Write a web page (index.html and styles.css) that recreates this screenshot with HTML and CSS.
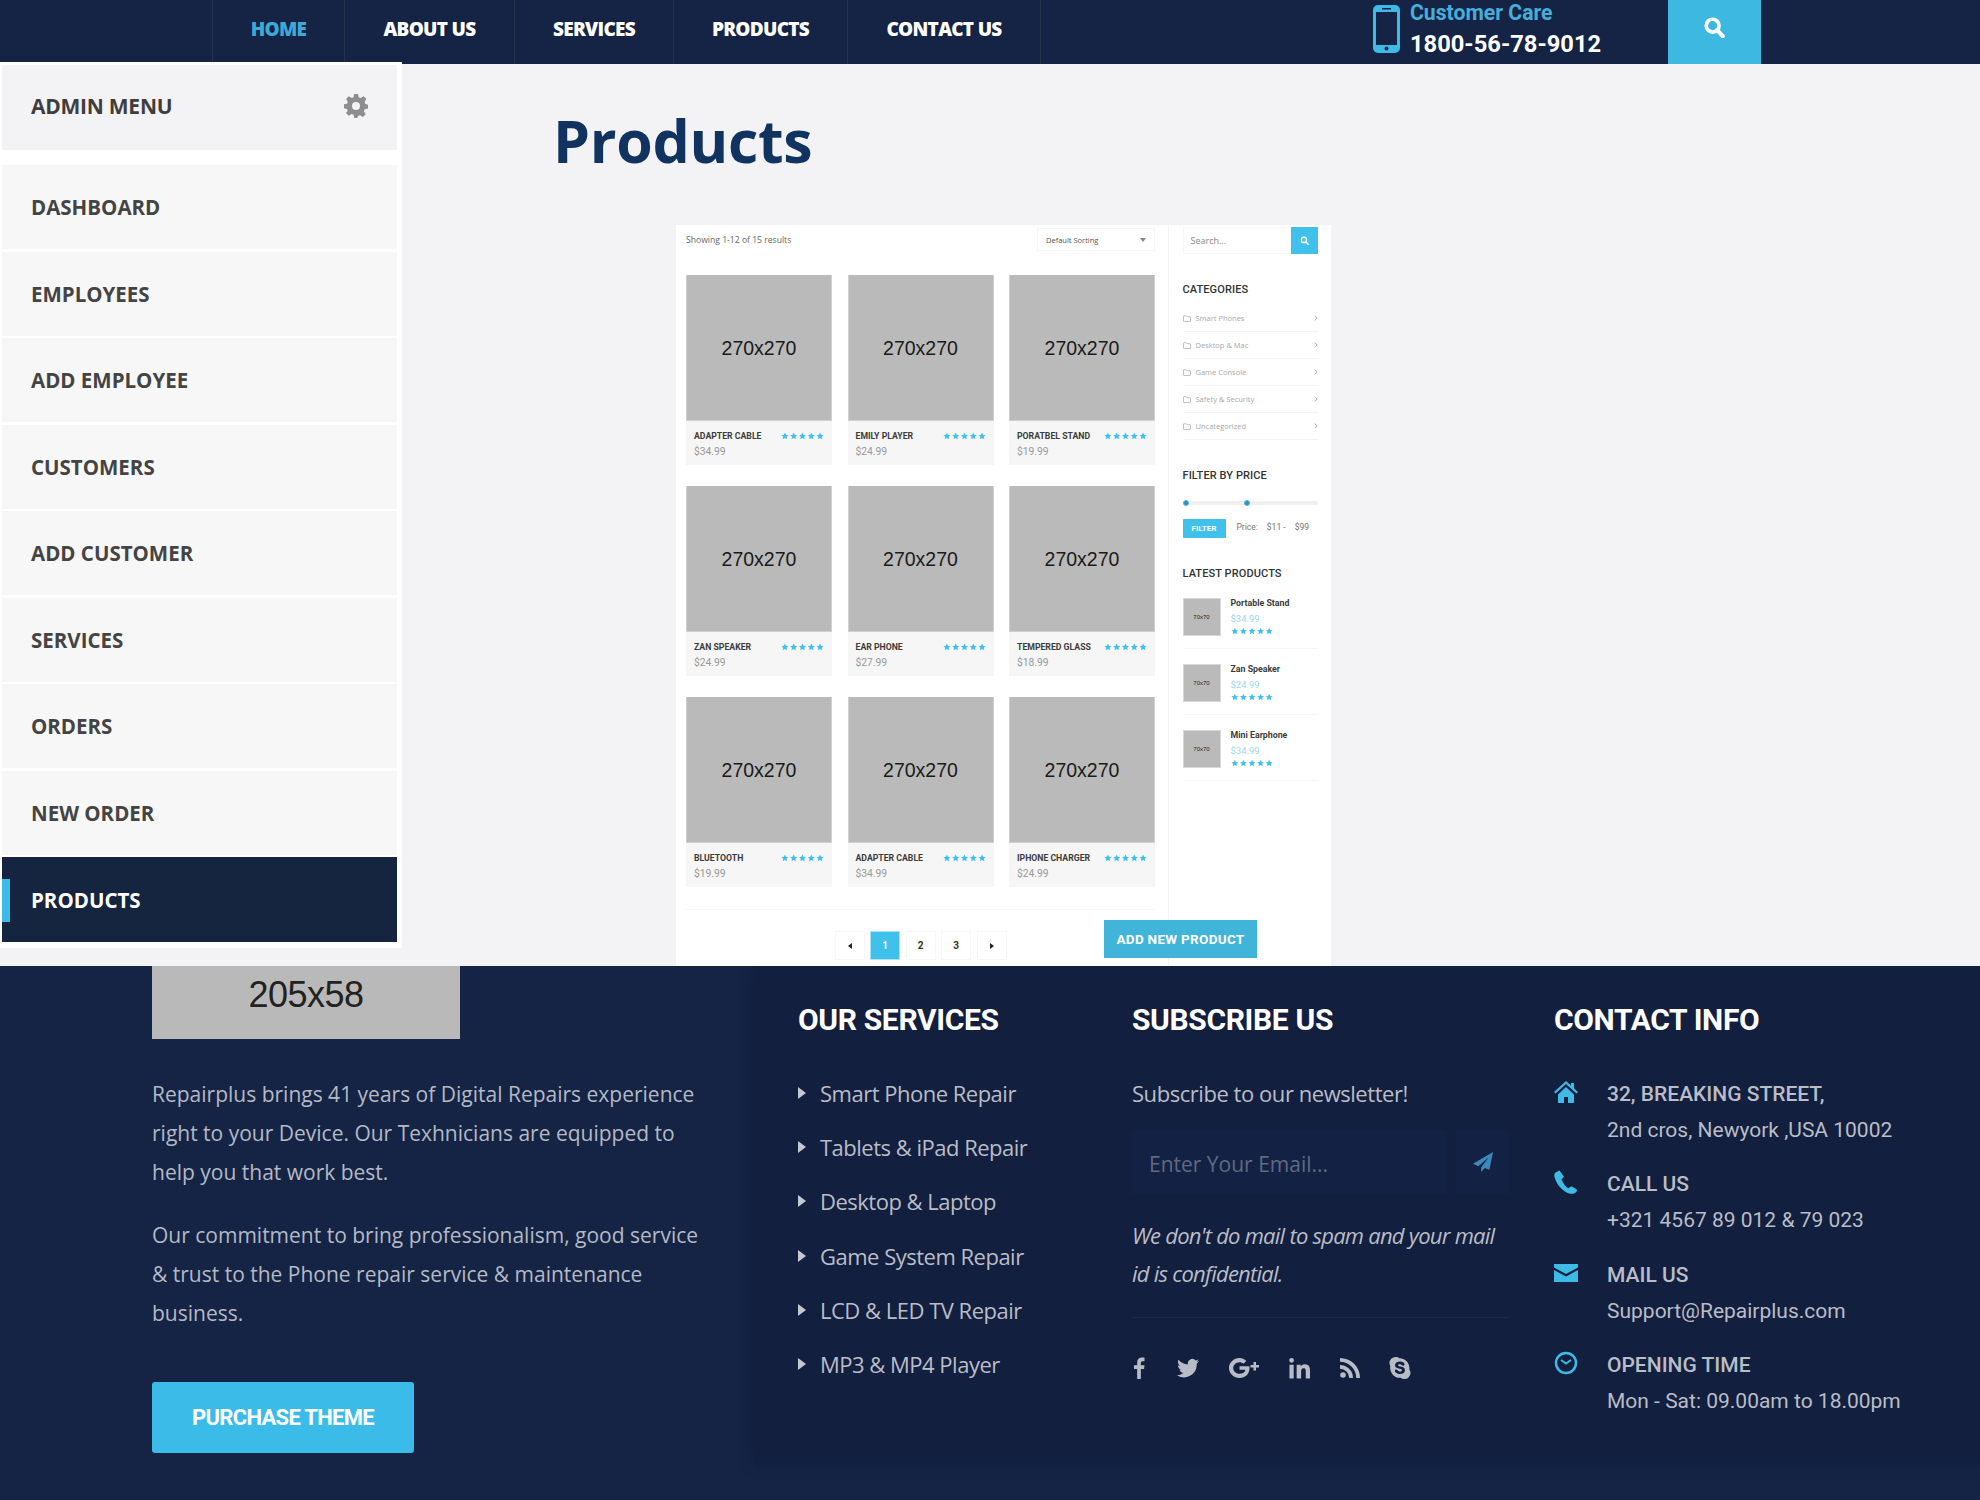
FILE: index.html
```html
<!DOCTYPE html>
<html lang="en">
<head>
<meta charset="utf-8">
<title>Products</title>
<link rel="stylesheet" href="styles.css">
</head>
<body>
<svg class="defs" width="0" height="0" aria-hidden="true">
  <symbol id="star" viewBox="0 0 24 24"><path d="M12 1.5l3.2 7 7.6.9-5.6 5.2 1.5 7.5L12 18.3l-6.7 3.8 1.5-7.5L1.2 9.400l7.600-.9z"/></symbol>
  <symbol id="stars" viewBox="0 0 44 8"><use href="#star" x="0" width="8" height="8"/><use href="#star" x="9" width="8" height="8"/><use href="#star" x="18" width="8" height="8"/><use href="#star" x="27" width="8" height="8"/><use href="#star" x="36" width="8" height="8"/></symbol>
  <symbol id="search" viewBox="0 0 24 24"><circle cx="10.500" cy="10.500" r="7" fill="none" stroke="currentColor" stroke-width="4"/><path d="M15.500 15.500l6 6.500" fill="none" stroke="currentColor" stroke-width="4.500" stroke-linecap="round"/></symbol>
  <symbol id="folder" viewBox="0 0 16 14"><path d="M1 2.500V12a1 1 0 0 0 1 1h12a1 1 0 0 0 1-1V4.500a1 1 0 0 0-1-1H8L6.500 1.500H2A1 1 0 0 0 1 2.500z" fill="none" stroke="currentColor" stroke-width="1.200"/></symbol>
  <symbol id="chev" viewBox="0 0 6 10"><path d="M1 1l4 4-4 4" fill="none" stroke="currentColor" stroke-width="1.200"/></symbol>
</svg>

<header class="topbar">
  <nav class="nav">
    <a class="nav-link is-active">HOME</a>
    <a class="nav-link">ABOUT US</a>
    <a class="nav-link">SERVICES</a>
    <a class="nav-link">PRODUCTS</a>
    <a class="nav-link">CONTACT US</a>
  </nav>
  <div class="care">
    <svg class="care-icon" viewBox="0 0 27 48"><path fill-rule="evenodd" d="M5 0h17a5 5 0 0 1 5 5v38a5 5 0 0 1-5 5H5a5 5 0 0 1-5-5V5a5 5 0 0 1 5-5zM3 7v33h21V7zM9 3v1.500h9V3zM13.500 41.500a2 2 0 1 0 0 4 2 2 0 0 0 0-4z"/></svg>
    <div class="care-text">
      <div class="care-label">Customer Care</div>
      <div class="care-number">1800-56-78-9012</div>
    </div>
  </div>
  <div class="top-search"><svg class="top-search-icon"><use href="#search"/></svg></div>
</header>

<main class="main">
  <aside class="sidebar">
    <div class="side-head">
      <span>ADMIN MENU</span>
      <svg class="gear" viewBox="0 0 24 24"><path fill-rule="evenodd" d="M10 0h4l.7 3.300 2 .8L19.600 2.300l2.800 2.800-1.800 2.900.8 2L24 10.700v3.900l-3.300.7-.8 2 1.800 2.900-2.800 2.800-2.900-1.800-2 .8L13.300 24h-3l-.7-3.300-2-.8-2.900 1.800-2.800-2.800L3.700 16.900l-.8-2L0 14.300v-4l3-.6.800-2L2.100 5 4.900 2.200 7.700 4l2-.8zM12 8a4 4 0 1 0 0 8 4 4 0 0 0 0-8z"/></svg>
    </div>
    <ul class="side-menu">
      <li class="side-item">DASHBOARD</li>
      <li class="side-item">EMPLOYEES</li>
      <li class="side-item">ADD EMPLOYEE</li>
      <li class="side-item">CUSTOMERS</li>
      <li class="side-item">ADD CUSTOMER</li>
      <li class="side-item">SERVICES</li>
      <li class="side-item">ORDERS</li>
      <li class="side-item">NEW ORDER</li>
      <li class="side-item is-current">PRODUCTS</li>
    </ul>
  </aside>

  <section class="content">
    <h1 class="page-title">Products</h1>
    <div class="shop">
      <div class="shop-main">
        <div class="shop-bar">
          <span class="showing">Showing 1-12 of 15 results</span>
          <div class="sort"><span>Default Sorting</span><i class="sort-caret"></i></div>
        </div>
        <div class="grid">
          <article class="card"><div class="ph">270x270</div><div class="cap"><div class="cap-top"><b>ADAPTER CABLE</b><svg class="stars"><use href="#stars"/></svg></div><div class="price">$34.99</div></div></article>
          <article class="card"><div class="ph">270x270</div><div class="cap"><div class="cap-top"><b>EMILY PLAYER</b><svg class="stars"><use href="#stars"/></svg></div><div class="price">$24.99</div></div></article>
          <article class="card"><div class="ph">270x270</div><div class="cap"><div class="cap-top"><b>PORATBEL STAND</b><svg class="stars"><use href="#stars"/></svg></div><div class="price">$19.99</div></div></article>
          <article class="card"><div class="ph">270x270</div><div class="cap"><div class="cap-top"><b>ZAN SPEAKER</b><svg class="stars"><use href="#stars"/></svg></div><div class="price">$24.99</div></div></article>
          <article class="card"><div class="ph">270x270</div><div class="cap"><div class="cap-top"><b>EAR PHONE</b><svg class="stars"><use href="#stars"/></svg></div><div class="price">$27.99</div></div></article>
          <article class="card"><div class="ph">270x270</div><div class="cap"><div class="cap-top"><b>TEMPERED GLASS</b><svg class="stars"><use href="#stars"/></svg></div><div class="price">$18.99</div></div></article>
          <article class="card"><div class="ph">270x270</div><div class="cap"><div class="cap-top"><b>BLUETOOTH</b><svg class="stars"><use href="#stars"/></svg></div><div class="price">$19.99</div></div></article>
          <article class="card"><div class="ph">270x270</div><div class="cap"><div class="cap-top"><b>ADAPTER CABLE</b><svg class="stars"><use href="#stars"/></svg></div><div class="price">$34.99</div></div></article>
          <article class="card"><div class="ph">270x270</div><div class="cap"><div class="cap-top"><b>IPHONE CHARGER</b><svg class="stars"><use href="#stars"/></svg></div><div class="price">$24.99</div></div></article>
        </div>
        <div class="pager">
          <span class="page"><i class="tri tri-l"></i></span>
          <span class="page is-on">1</span>
          <span class="page">2</span>
          <span class="page">3</span>
          <span class="page"><i class="tri tri-r"></i></span>
        </div>
      </div>
      <div class="shop-side">
        <div class="side-search"><span class="side-search-box">Search...</span><span class="side-search-btn"><svg class="mini-search"><use href="#search"/></svg></span></div>
        <h4 class="w-title w-cat">CATEGORIES</h4>
        <ul class="cats">
          <li class="cat"><svg class="folder"><use href="#folder"/></svg><span>Smart Phones</span><svg class="chev"><use href="#chev"/></svg></li>
          <li class="cat"><svg class="folder"><use href="#folder"/></svg><span>Desktop &amp; Mac</span><svg class="chev"><use href="#chev"/></svg></li>
          <li class="cat"><svg class="folder"><use href="#folder"/></svg><span>Game Console</span><svg class="chev"><use href="#chev"/></svg></li>
          <li class="cat"><svg class="folder"><use href="#folder"/></svg><span>Safety &amp; Security</span><svg class="chev"><use href="#chev"/></svg></li>
          <li class="cat"><svg class="folder"><use href="#folder"/></svg><span>Uncategorized</span><svg class="chev"><use href="#chev"/></svg></li>
        </ul>
        <h4 class="w-title w-filter">FILTER BY PRICE</h4>
        <div class="slider"><i class="knob"></i><i class="knob"></i></div>
        <div class="filter-row"><span class="filter-btn">FILTER</span><span class="filter-price"><span>Price:</span><span>$11 -</span><span>$99</span></span></div>
        <h4 class="w-title w-latest">LATEST PRODUCTS</h4>
        <div class="latest"><div class="thumb">70x70</div><div class="latest-info"><b>Portable Stand</b><span>$34.99</span><svg class="stars-sm"><use href="#stars"/></svg></div></div>
        <div class="latest"><div class="thumb">70x70</div><div class="latest-info"><b>Zan Speaker</b><span>$24.99</span><svg class="stars-sm"><use href="#stars"/></svg></div></div>
        <div class="latest"><div class="thumb">70x70</div><div class="latest-info"><b>Mini Earphone</b><span>$34.99</span><svg class="stars-sm"><use href="#stars"/></svg></div></div>
      </div>
      <a class="add-btn">ADD NEW PRODUCT</a>
    </div>
  </section>
</main>

<footer class="footer">
  <div class="foot-about">
    <div class="foot-logo">205x58</div>
    <p class="foot-p">Repairplus brings 41 years of Digital Repairs experience right to your Device. Our Texhnicians are equipped to help you that work best.</p>
    <p class="foot-p">Our commitment to bring professionalism, good service &amp; trust to the Phone repair service &amp; maintenance business.</p>
    <a class="buy-btn">PURCHASE THEME</a>
  </div>
  <div class="foot-right">
    <div class="foot-services">
      <h3 class="foot-h">OUR SERVICES</h3>
      <ul class="svc-list">
        <li class="svc">Smart Phone Repair</li>
        <li class="svc">Tablets &amp; iPad Repair</li>
        <li class="svc">Desktop &amp; Laptop</li>
        <li class="svc">Game System Repair</li>
        <li class="svc">LCD &amp; LED TV Repair</li>
        <li class="svc">MP3 &amp; MP4 Player</li>
      </ul>
    </div>
    <div class="foot-sub">
      <h3 class="foot-h">SUBSCRIBE US</h3>
      <p class="sub-line">Subscribe to our newsletter!</p>
      <div class="sub-form">
        <span class="sub-input">Enter Your Email...</span>
        <span class="sub-send"><svg class="send" viewBox="0 0 24 24"><path d="M23 1L1 14l6 2.500L18 7l-8 11v5l4-4.500 5 2z"/></svg></span>
      </div>
      <p class="sub-note">We don't do mail to spam and your mail id is confidential.</p>
      <div class="social">
        <svg class="soc soc-f" viewBox="0 0 12 24"><path d="M8 24V13h3.500l.5-4H8V6.500C8 5.300 8.400 4.500 10 4.500h2V.7C11.600.600 10.500.500 9.200.500 6.300.500 4 2.300 4 5.800V9H.5v4H4v11z"/></svg>
        <svg class="soc soc-t" viewBox="0 0 24 20"><path d="M24 2.400c-.9.400-1.800.7-2.800.8 1-.6 1.800-1.600 2.200-2.700-1 .6-2 1-3.100 1.200A4.900 4.900 0 0 0 11.900 6.100C7.800 5.900 4.200 3.900 1.700.9.300 3.200 1 6.100 3.200 7.500c-.8 0-1.600-.2-2.200-.6 0 2.400 1.600 4.400 3.900 4.900-.7.200-1.500.2-2.200.1.600 2 2.400 3.400 4.600 3.400A9.900 9.900 0 0 1 0 17.800 13.900 13.900 0 0 0 21.500 5.400c1-.7 1.800-1.600 2.500-3z"/></svg>
        <svg class="soc soc-g" viewBox="0 0 32 22"><path d="M10.500 9.200v3.600h5.900c-.5 2.500-2.600 4-5.900 4-3.500 0-6.300-2.800-6.300-5.800s2.800-5.800 6.300-5.800c1.500 0 2.900.5 4 1.500l2.800-2.800C15.400 2 13.100 1 10.500 1 4.700 1 0 5.500 0 11s4.700 10 10.500 10c6 0 10-4.100 10-9.900 0-.7-.1-1.300-.2-1.900zM27 8V5h-2.500v3h-3v2.500h3v3H27v-3h3V8z"/></svg>
        <svg class="soc soc-in" viewBox="0 0 22 22"><path d="M.5 7.500h4.400V22H.5zM2.700.500a2.500 2.500 0 1 1 0 5 2.500 2.500 0 0 1 0-5zM8 7.500h4.200v2c.6-1.200 2.100-2.400 4.300-2.400 4.600 0 5.500 3 5.500 7V22h-4.400v-7c0-1.700 0-3.800-2.300-3.800s-2.600 1.800-2.600 3.700V22H8z"/></svg>
        <svg class="soc soc-r" viewBox="0 0 20 20"><circle cx="3" cy="17" r="2.800"/><path d="M0 7v3.800A9.200 9.200 0 0 1 9.200 20H13A13 13 0 0 0 0 7zM0 0v3.800A16.200 16.200 0 0 1 16.200 20H20A20 20 0 0 0 0 0z"/></svg>
        <svg class="soc soc-s" viewBox="0 0 22 24"><path fill-rule="evenodd" d="M7 1c1.300 0 2.400.500 3.300 1.200C14 1.700 21 5 20.500 13.800c.7 1 1 2.100 1 3.200A6 6 0 0 1 15 23c-1.300 0-2.400-.400-3.300-1.200C6 22.500.5 17.500 1.200 10 .7 9 .5 8 .5 7A6 6 0 0 1 7 1zM11 5.500c-3 0-5 1.500-5 3.600 0 4.500 7 3 7 5.200 0 .8-.9 1.300-2 1.300-2.300 0-2.300-2-3.800-2-.8 0-1.300.5-1.300 1.200 0 1.700 2.500 3.200 5.100 3.200 3 0 5-1.500 5-3.800 0-4.600-7-3.200-7-5 0-.7.700-1 1.800-1 1.900 0 2 1.500 3.400 1.500.8 0 1.400-.5 1.400-1.200 0-1.700-2.400-3-4.600-3z"/></svg>
      </div>
    </div>
    <div class="foot-contact">
      <h3 class="foot-h">CONTACT INFO</h3>
      <div class="info">
        <svg class="info-icon" viewBox="0 0 24 22"><path d="M12 0L0 11l1.500 1.500L12 3l10.500 9.500L24 11l-4-3.700V2h-3v2.600zM4 13.500V22h6v-6h4v6h6v-8.500L12 6z"/></svg>
        <div class="info-text"><strong>32, BREAKING STREET,</strong><span>2nd cros, Newyork ,USA 10002</span></div>
      </div>
      <div class="info">
        <svg class="info-icon" viewBox="0 0 24 24"><path d="M5.500.500L1.500 2.500C.500 3.500 0 5 .5 7c1.500 5.500 5 11 10.500 14.500 2.500 1.800 5.500 2.500 8 2.200 1.500-.2 3-1.200 4-3l-.5-1.500-5-3-3 2c-2.500-1-5.500-5-7-9l2.500-2.500z"/></svg>
        <div class="info-text"><strong>CALL US</strong><span>+321 4567 89 012 &amp; 79 023</span></div>
      </div>
      <div class="info">
        <svg class="info-icon" viewBox="0 0 24 18"><path d="M0 0h24v3.500L12 10 0 3.500zM0 6l12 6.500L24 6v12H0z"/></svg>
        <div class="info-text"><strong>MAIL US</strong><span>Support@Repairplus.com</span></div>
      </div>
      <div class="info">
        <svg class="info-icon" viewBox="0 0 24 24"><circle cx="12" cy="12" r="10" fill="none" stroke="currentColor" stroke-width="2.500"/><path d="M7 9l5 3.500L17 9" fill="none" stroke="currentColor" stroke-width="2"/></svg>
        <div class="info-text"><strong>OPENING TIME</strong><span>Mon - Sat: 09.00am to 18.00pm</span></div>
      </div>
    </div>
  </div>
</footer>
</body>
</html>
```
FILE: styles.css
```css
* { box-sizing: border-box; }
html, body { margin: 0; padding: 0; }
body { width: 1980px; height: 1500px; overflow: hidden; background: #f3f3f5; font-family: "Open Sans", sans-serif; color: #333; }
ul { margin: 0; padding: 0; list-style: none; }
.defs { display: block; height: 0; }

/* top bar */
.topbar { height: 64px; background: #152444; display: flex; padding-left: 212px; color: #fff; }
.nav { display: flex; width: 829px; border-left: 1px solid #24324c; }
.nav-link { display: flex; align-items: center; justify-content: center; height: 58px; font-size: 19px; font-weight: 800; letter-spacing: -0.7px; color: #fff; border-right: 1px solid #24324c; box-sizing: content-box; padding-bottom: 6px; }
.nav-link:nth-child(1) { width: 131px; }
.nav-link:nth-child(2) { width: 169px; }
.nav-link:nth-child(3) { width: 158px; }
.nav-link:nth-child(4) { width: 173px; }
.nav-link:nth-child(5) { width: 192px; }
.nav-link.is-active { color: #3fa9d6; }
.care { display: flex; margin-left: 332px; width: 295px; }
.care-icon { width: 27px; height: 48px; margin-top: 5px; fill: #3dbbe6; }
.care-text { margin-left: 10px; font-family: "Roboto", sans-serif; font-weight: 700; }
.care-label { font-size: 21.200px; line-height: 26px; color: #46aedb; }
.care-number { font-size: 23.700px; line-height: 34px; margin-top: 1px; color: #fff; }
.top-search { width: 93px; height: 64px; background: #3db8e0; display: flex; justify-content: center; padding-top: 16px; }
.top-search-icon { width: 22px; height: 22px; color: #fff; margin-left: -2px; }

/* main */
.main { height: 902px; display: flex; align-items: flex-start; }
.sidebar { width: 402px; height: 886px; margin-top: -2px; background: #fff; padding: 3px 5px 0 2px; position: relative; }
.side-head { height: 85px; background: #f3f3f5; display: flex; align-items: center; justify-content: space-between; padding: 0 29px 4px; font-size: 21px; font-weight: 700; letter-spacing: -0.25px; color: #3e3e3e; margin-bottom: 15px; }
.gear { width: 24px; height: 24px; fill: #8d8d8d; margin-right: 0; }
.side-menu { display: flex; flex-direction: column; gap: 2.500px; }
.side-item { height: 84px; background: #f7f7f7; display: flex; align-items: center; padding-left: 29px; font-size: 20.500px; font-weight: 700; color: #444; }
.side-item.is-current { height: 85px; background: #15243f; color: #fff; position: relative; }
.side-item.is-current::before { content: ""; position: absolute; left: 0; top: 22px; width: 8px; height: 43px; background: #3dbbe6; }

.content { flex: 1; display: flex; flex-direction: column; height: 902px; }
.page-title { margin: 36px 0 0 151px; font-size: 59px; line-height: 80px; font-weight: 700; letter-spacing: -0.3px; color: #10335f; }
.shop { margin: 45px 0 0 274px; width: 655px; height: 741px; background: #fff; display: flex; position: relative; }
.shop-main { width: 493px; border-right: 1px solid #f3f3f5; padding: 0 13px 0 10px; }
.shop-bar { height: 50px; display: flex; justify-content: space-between; align-items: flex-start; }
.showing { font-size: 8.600px; line-height: 30px; color: #666; }
.sort { width: 118px; height: 23px; margin-top: 3px; border: 1px solid #f6f6f6; display: flex; justify-content: space-between; align-items: center; padding: 0 8px; font-size: 7.500px; color: #555; }
.sort-caret { width: 0; height: 0; border: 3.500px solid transparent; border-top: 4px solid #888; border-bottom: 0; }
.grid { display: grid; grid-template-columns: repeat(3, 146px); grid-auto-rows: 190px; column-gap: 15.500px; row-gap: 21px; height: 635px; border-bottom: 1px solid #f7f7f7; }
.card { display: flex; flex-direction: column; }
.ph { height: 146px; padding-top: 2px; background: #bababa; border: 1px solid #d0d0d0; border-top-width: 0; display: flex; align-items: center; justify-content: center; font-family: "Liberation Sans", sans-serif; font-size: 19.500px; color: #1a1a1a; }
.cap { height: 44px; background: #f6f6f6; padding: 8px 8px 0; font-family: "Roboto", sans-serif; }
.cap-top { display: flex; justify-content: space-between; align-items: center; height: 14px; }
.cap-top b { font-size: 8.700px; font-weight: 700; color: #3c3c3c; }
.stars { width: 43px; height: 8px; fill: #3fc1ec; }
.price { margin-top: 2px; font-size: 10.300px; line-height: 14px; color: #999; }
.pager { display: flex; justify-content: center; gap: 5.500px; margin-top: 21px; }
.page { width: 30px; height: 29px; border: 1px solid #f7f7f7; display: flex; align-items: center; justify-content: center; font-family: "Roboto", sans-serif; font-size: 10px; font-weight: 700; color: #333; }
.page.is-on { background: #3fc1ec; color: #fff; border-color: #a8e3f6; }
.tri { width: 0; height: 0; border: 3px solid transparent; }
.tri-l { border-right: 4px solid #222; border-left: 0; }
.tri-r { border-left: 4px solid #222; border-right: 0; }

.shop-side { flex: 1; padding: 2px 13px 0 13.500px; font-family: "Roboto", sans-serif; }
.side-search { display: flex; height: 27px; }
.side-search-box { flex: 1; border: 1px solid #f6f6f6; font-family: "Open Sans", sans-serif; font-size: 9px; line-height: 25px; padding-left: 7px; color: #888; }
.side-search-btn { width: 27px; background: #3fc1ec; display: flex; align-items: center; justify-content: center; }
.mini-search { width: 9px; height: 9px; color: #fff; }
.w-title { margin: 0; font-size: 11px; line-height: 14px; font-weight: 500; letter-spacing: .1px; color: #333; }
.w-cat { margin-top: 29px; }
.cats { margin-top: 8px; }
.cat { height: 27px; border-bottom: 1px solid #f5f5f5; display: flex; align-items: center; font-size: 7.500px; color: #a8a8a8; font-family: "Open Sans", sans-serif; }
.cat span { flex: 1; }
.folder { width: 8px; height: 7px; margin-right: 5px; color: #999; }
.chev { width: 4px; height: 6px; color: #888; }
.w-filter { margin-top: 29px; }
.slider { margin-top: 18px; height: 4px; background: #f0f0f0; border-radius: 2px; display: flex; align-items: center; gap: 55px; }
.knob { width: 6px; height: 6px; border-radius: 50%; background: #2f8fbf; border: 1px solid #57b6de; flex: none; }
.filter-row { display: flex; align-items: center; margin-top: 14px; }
.filter-btn { width: 43px; height: 19px; background: #3fc1ec; border-radius: 1px; color: #fff; font-size: 8px; font-weight: 700; text-align: center; line-height: 19px; }
.filter-price { display: flex; gap: 9px; margin-left: 11px; margin-top: -3px; font-size: 8.500px; color: #777; }
.w-latest { margin-top: 29px; margin-bottom: 17px; }
.latest { height: 51px; margin-bottom: 15px; display: flex; border-bottom: 1px solid #f7f7f7; }
.thumb { width: 38px; height: 38px; background: #bababa; border: 1px solid #d8d8d8; display: flex; align-items: center; justify-content: center; font-family: "Liberation Sans", sans-serif; font-size: 6px; color: #222; }
.latest-info { margin-left: 10px; display: flex; flex-direction: column; margin-top: -1px; }
.latest-info b { font-size: 8.800px; line-height: 12px; font-weight: 700; color: #3c3c3c; }
.latest-info span { font-size: 9.500px; line-height: 14px; margin-top: 3px; color: #9ad9f0; }
.stars-sm { width: 42px; height: 8px; fill: #3fc1ec; margin-top: 1px; }
.add-btn { position: absolute; left: 428px; top: 695px; width: 153px; height: 38px; background: #41b5d9; color: #fff; font-family: "Roboto", sans-serif; font-weight: 700; font-size: 13.500px; display: flex; align-items: center; justify-content: center; letter-spacing: .3px; }

/* footer */
.footer { height: 534px; background: #152445; display: flex; overflow: hidden; }
.foot-about { width: 755px; padding-left: 152px; }
.foot-logo { width: 308px; height: 73px; background: #b9b9b9; display: flex; align-items: center; justify-content: center; padding-bottom: 15px; font-family: "Liberation Sans", sans-serif; font-size: 36px; letter-spacing: -0.5px; color: #222; }
.foot-p { width: 560px; margin: 36px 0 0; font-size: 21px; line-height: 39px; color: #b4b9c4; }
.foot-p + .foot-p { margin-top: 23.500px; }
.buy-btn { display: flex; align-items: center; justify-content: center; width: 262px; height: 71px; margin-top: 49.500px; background: #3bbce8; border-radius: 3px; color: #fff; font-family: "Roboto", sans-serif; font-weight: 700; font-size: 22px; letter-spacing: -0.7px; }
.foot-right { width: 1225px; height: 498px; background: #131f3e; box-shadow: 0 0 14px rgba(10, 15, 40, .35); display: flex; padding-left: 43px; font-family: "Roboto", sans-serif; }
.foot-h { margin: 39px 0 0; font-size: 30px; line-height: 30px; font-weight: 700; color: #fff; letter-spacing: -0.35px; }
.foot-services { width: 334px; }
.svc-list { margin-top: 38px; display: flex; flex-direction: column; gap: 14.200px; }
.svc { position: relative; padding-left: 22px; font-size: 22px; line-height: 40px; letter-spacing: -0.5px; color: #b9bdc7; font-family: "Open Sans", sans-serif; }
.svc::before { content: ""; position: absolute; left: 0; top: 14px; border: 6px solid transparent; border-left: 8px solid #c4c8d0; border-right: 0; }
.foot-sub { width: 377px; }
.sub-line { margin: 38px 0 0; font-size: 22px; line-height: 40px; letter-spacing: -0.45px; color: #b9bdc7; font-family: "Open Sans", sans-serif; }
.sub-form { display: flex; justify-content: space-between; margin-top: 17px; }
.sub-input { width: 315px; height: 64px; background: #132244; padding-left: 17px; font-family: "Open Sans", sans-serif; font-size: 21px; line-height: 68px; color: #5e6a80; }
.sub-send { width: 53px; height: 64px; background: #132244; display: flex; align-items: center; justify-content: center; }
.send { width: 22px; height: 22px; fill: #3d87bd; }
.sub-note { margin: 22px 0 0; padding-bottom: 25px; border-bottom: 1px solid #1c2a48; font-size: 22px; line-height: 38px; font-style: italic; color: #b9bdc7; font-family: "Open Sans", sans-serif; letter-spacing: -0.75px; }
.social { display: flex; align-items: center; margin-top: 38px; height: 24px; }
.soc { fill: #b8bcc6; height: 22px; flex: none; }
.soc-f { width: 12px; margin-left: 1px; }
.soc-t { width: 22px; margin-left: 32px; height: 20px; }
.soc-g { width: 32px; margin-left: 30px; }
.soc-in { width: 21px; margin-left: 28px; }
.soc-r { width: 20px; margin-left: 30px; height: 20px; }
.soc-s { width: 22px; margin-left: 29px; height: 24px; }
.foot-contact { padding-left: 45px; }
.info { display: flex; height: 90.300px; }
.foot-h + .info { margin-top: 41px; }
.info-icon { width: 24px; height: 24px; margin-top: 4px; fill: #3dbbe6; color: #3dbbe6; flex: none; }
.info-text { margin-left: 29px; display: flex; flex-direction: column; font-size: 21px; line-height: 36px; color: #b9bdc7; }
.info-text strong { font-weight: 500; }
```
